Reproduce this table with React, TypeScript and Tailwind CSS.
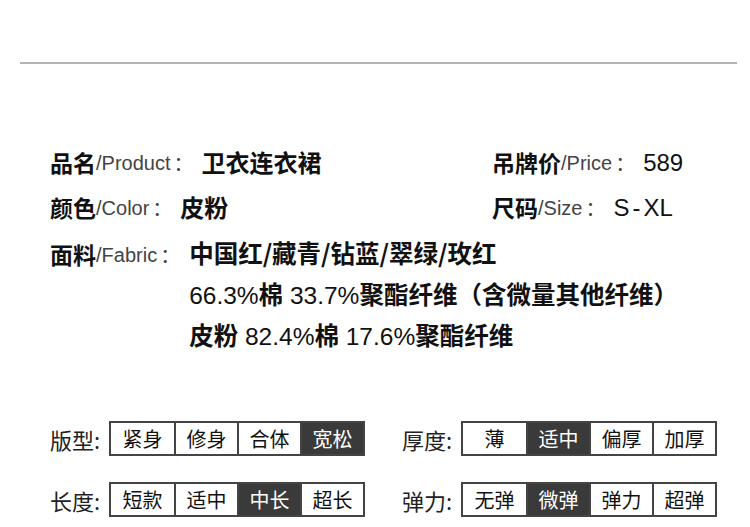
import type { ReactNode } from 'react'

const cjk = '"Noto Sans CJK SC", "Liberation Sans", sans-serif'
const latin = '"Liberation Sans", "Noto Sans CJK SC", sans-serif'

// bold for the Chinese runs, plain for digits and latin
function Mixed({ text }: { text: string }) {
  const parts = text.split(/([\u3000-\u9fff\uff00-\uffef/]+)/).filter(Boolean)
  return (
    <>
      {parts.map((p, i) =>
        /[\u3000-\u9fff\uff00-\uffef/]/.test(p) ? (
          <span key={i} className="font-bold" style={{ fontFamily: cjk }}>
            {p}
          </span>
        ) : (
          <span key={i}>{p}</span>
        ),
      )}
    </>
  )
}

interface FieldProps {
  zh: string
  en: string
  children: ReactNode
}

function Label({ zh, en }: { zh: string; en: string }) {
  return (
    <>
      <span className="text-[23px] font-bold text-[#111]" style={{ fontFamily: cjk }}>
        {zh}
      </span>
      <span className="text-[20px] text-[#444]">/{en}</span>
      <span className="ml-[3px] w-[26px] text-[20px] text-[#444]" style={{ fontFamily: cjk }}>
        ：
      </span>
    </>
  )
}

function Field({ zh, en, children }: FieldProps) {
  return (
    <div className="flex h-[45px] items-center whitespace-nowrap">
      <Label zh={zh} en={en} />
      <span className="ml-[2px] text-[24px] text-[#111]">{children}</span>
    </div>
  )
}

interface OptionRowProps {
  label: string
  options: string[]
  active: number
}

function OptionRow({ label, options, active }: OptionRowProps) {
  return (
    <div className="flex items-center">
      <span className="w-[59px] text-[22px] leading-none text-[#222]">{label}:</span>
      <div className="flex h-[35px] border-2 border-[#444]">
        {options.map((o, i) => (
          <div
            key={o}
            className={`flex w-[63px] items-center justify-center text-[20px] ${
              i > 0 ? 'border-l-2 border-[#444]' : ''
            } ${i === active ? 'bg-[#3a3a3a] text-white' : 'bg-white text-[#111]'}`}
          >
            {o}
          </div>
        ))}
      </div>
    </div>
  )
}

const fabric = [
  '中国红/藏青/钻蓝/翠绿/玫红',
  '66.3%棉 33.7%聚酯纤维（含微量其他纤维）',
  '皮粉 82.4%棉 17.6%聚酯纤维',
]

export default function App() {
  return (
    <div className="h-[527px] w-[750px] overflow-hidden bg-white pt-[62px]" style={{ fontFamily: latin }}>
      <div className="ml-[20px] h-[2px] w-[717px] bg-[#b3b3b3]" />

      {/* Product info */}
      <div className="mt-[76px] pl-[50px]">
        <div className="grid grid-cols-[442px_1fr]">
          <Field zh="品名" en="Product">
            <Mixed text="卫衣连衣裙" />
          </Field>
          <Field zh="吊牌价" en="Price">
            589
          </Field>
          <Field zh="颜色" en="Color">
            <Mixed text="皮粉" />
          </Field>
          <Field zh="尺码" en="Size">
            S<span className="mx-[3px]">-</span>XL
          </Field>
        </div>

        <div className="mt-[4px] flex whitespace-nowrap">
          <div className="flex h-[41px] items-center self-start">
            <Label zh="面料" en="Fabric" />
          </div>
          <div className="ml-[3px] text-[24.5px] text-[#111]">
            {fabric.map((line) => (
              <div key={line} className="flex h-[41px] items-center">
                <span>
                  <Mixed text={line} />
                </span>
              </div>
            ))}
          </div>
        </div>
      </div>

      {/* Attribute scales */}
      <div className="mt-[64px] grid grid-cols-[352px_1fr] gap-y-[26px] pl-[50px]" style={{ fontFamily: cjk }}>
        <OptionRow label="版型" options={['紧身', '修身', '合体', '宽松']} active={3} />
        <OptionRow label="厚度" options={['薄', '适中', '偏厚', '加厚']} active={1} />
        <OptionRow label="长度" options={['短款', '适中', '中长', '超长']} active={2} />
        <OptionRow label="弹力" options={['无弹', '微弹', '弹力', '超弹']} active={1} />
      </div>
    </div>
  )
}
